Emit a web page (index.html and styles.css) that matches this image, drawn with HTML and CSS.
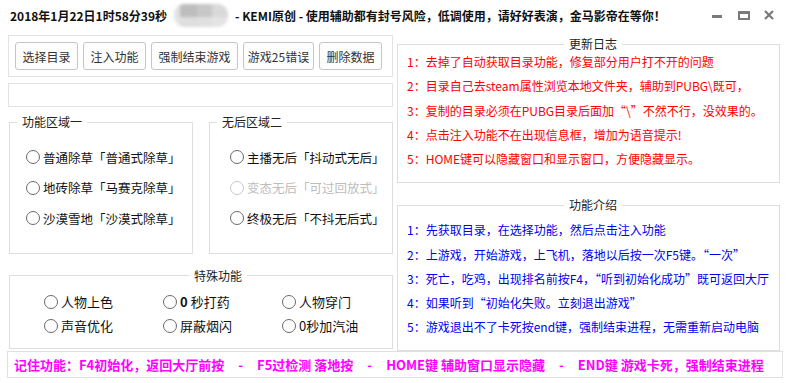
FILE: index.html
```html
<!DOCTYPE html>
<html lang="zh-CN">
<head>
    <meta charset="UTF-8">
    <title>KEMI原创</title>
    <link rel="stylesheet" href="styles.css">
</head>
<body>
    <div class="window">
        <div class="titlebar">
            <span class="title-time">2018年1月22日1时58分39秒</span>
            <span class="blurred"></span>
            <span class="title-text">- KEMI原创 - 使用辅助都有封号风险，低调使用，请好好表演，金马影帝在等你！</span>
            <div class="win-buttons">
                <span class="btn-min"></span>
                <span class="btn-max"></span>
                <svg class="btn-close" width="10" height="10" viewBox="0 0 10 10"><path d="M1 1L9 9M9 1L1 9" stroke="#7a7a7a" stroke-width="2.2"/></svg>
            </div>
        </div>

        <div class="main">
            <div class="left-col">
                <div class="toolbar">
                    <button class="tool-btn w63">选择目录</button>
                    <button class="tool-btn w63">注入功能</button>
                    <button class="tool-btn w87">强制结束游戏</button>
                    <button class="tool-btn w71">游戏25错误</button>
                    <button class="tool-btn w63">删除数据</button>
                </div>
                <div class="status-box"></div>

                <div class="group-row">
                    <fieldset class="group">
                        <legend>功能区域一</legend>
                        <div class="radio-list">
                            <label class="radio"><span class="dot"></span>普通除草「普通式除草」</label>
                            <label class="radio"><span class="dot"></span>地砖除草「马赛克除草」</label>
                            <label class="radio"><span class="dot"></span>沙漠雪地「沙漠式除草」</label>
                        </div>
                    </fieldset>
                    <fieldset class="group group-two">
                        <legend>无后区域二</legend>
                        <div class="radio-list">
                            <label class="radio"><span class="dot"></span>主播无后「抖动式无后」</label>
                            <label class="radio disabled"><span class="dot"></span>变态无后「可过回放式」</label>
                            <label class="radio"><span class="dot"></span>终极无后「不抖无后式」</label>
                        </div>
                    </fieldset>
                </div>

                <fieldset class="special">
                    <legend>特殊功能</legend>
                    <div class="special-grid">
                        <label class="radio"><span class="dot"></span>人物上色</label>
                        <label class="radio"><span class="dot"></span><b class="zero">0</b>秒打药</label>
                        <label class="radio"><span class="dot"></span>人物穿门</label>
                        <label class="radio"><span class="dot"></span>声音优化</label>
                        <label class="radio"><span class="dot"></span>屏蔽烟闪</label>
                        <label class="radio"><span class="dot"></span>0秒加汽油</label>
                    </div>
                </fieldset>
            </div>

            <div class="right-col">
                <fieldset class="panel log-panel">
                    <legend>更新日志</legend>
                    <ul class="lines red">
                        <li>1：去掉了自动获取目录功能，修复部分用户打不开的问题</li>
                        <li>2：目录自己去steam属性浏览本地文件夹，辅助到PUBG\既可，</li>
                        <li>3：复制的目录必须在PUBG目录后面加“\”不然不行，没效果的。</li>
                        <li>4：点击注入功能不在出现信息框，增加为语音提示!</li>
                        <li>5：HOME键可以隐藏窗口和显示窗口，方便隐藏显示。</li>
                    </ul>
                </fieldset>
                <fieldset class="panel intro-panel">
                    <legend>功能介绍</legend>
                    <ul class="lines blue">
                        <li>1：先获取目录，在选择功能，然后点击注入功能</li>
                        <li>2：上游戏，开始游戏，上飞机，落地以后按一次F5键。“一次”</li>
                        <li>3：死亡，吃鸡，出现排名前按F4，“听到初始化成功”既可返回大厅</li>
                        <li>4：如果听到“初始化失败。立刻退出游戏”</li>
                        <li>5：游戏退出不了卡死按end键，强制结束进程，无需重新启动电脑</li>
                    </ul>
                </fieldset>
            </div>
        </div>

        <div class="tips-bar">
            <span>记住功能：F4初始化，返回大厅前按</span>
            <span>-</span>
            <span>F5过检测 落地按</span>
            <span>-</span>
            <span>HOME键 辅助窗口显示隐藏</span>
            <span>-</span>
            <span>END键 游戏卡死，强制结束进程</span>
        </div>
    </div>
</body>
</html>
```

FILE: styles.css
```css
body {
    margin: 0; padding: 0;
    background: #fff;
    font-family: "Noto Sans CJK SC", sans-serif;
    font-size: 12px; color: #222;
}
.window { width: 786px; height: 383px; overflow: hidden; background: #fff; }

/* title bar */
.titlebar {
    height: 30px; display: flex; align-items: center;
    padding: 0 12px 0 10px; box-sizing: border-box;
    font-weight: bold; font-size: 12px; color: #111;
}
.blurred {
    width: 54px; height: 23px; margin: 0 7px;
    border-radius: 10px; filter: blur(1.5px);
    background:
        linear-gradient(180deg, rgba(255,255,255,0) 55%, rgba(230,230,230,0.8) 56%),
        linear-gradient(90deg, #e2e2e2 0 12%, #bdbdbd 12% 42%, #c7c7c7 42% 70%, #d9d9d9 70% 100%);
}
.win-buttons { margin-left: auto; display: flex; align-items: center; }
.btn-min { width: 10px; height: 3px; background: #7a7a7a; margin-right: 16px; margin-top: 2px; }
.btn-max {
    width: 12px; height: 9px; box-sizing: border-box;
    border: 2px solid #7a7a7a; border-top-width: 3px; margin-right: 14px;
}

/* layout */
.main { display: flex; gap: 4px; padding-top: 5px; height: 316px; box-sizing: border-box; }
.left-col { width: 393px; padding-left: 8px; box-sizing: border-box; }
.right-col { width: 383px; }

.toolbar {
    border: 1px solid #e3e3e3; padding: 6px;
    display: flex; gap: 5px;
}
.tool-btn {
    height: 28px; padding: 0;
    border: 1px solid #c6c6c6; border-radius: 3px;
    background: #fdfdfd; color: #333;
    font-family: inherit; font-size: 12px;
}
.w63 { width: 63px; }
.w71 { width: 71px; }
.w87 { width: 87px; }
.status-box { border: 1px solid #e3e3e3; height: 22px; margin-top: 6px; }

fieldset { margin: 0; border: 1px solid #dedede; min-width: 0; }
legend { padding: 0 5px; line-height: 18px; font-size: 12px; color: #222; }

.group-row { display: flex; gap: 16px; margin: 6px 0 0 1px; }
.group { width: 184px; box-sizing: border-box; padding: 11px 0 19px 7px; }
.radio-list { padding-left: 9px; }
.group-two .radio-list { padding-left: 13px; }

.radio { display: flex; align-items: center; height: 30.5px; font-size: 12.5px; color: #111; white-space: nowrap; }
.dot {
    width: 14px; height: 14px; box-sizing: border-box;
    border: 1px solid #6a6a6a; border-radius: 50%;
    background: #fff; margin-right: 3px; flex-shrink: 0;
}
.radio.disabled { color: #bdbdbd; }
.radio.disabled .dot { border-color: #c8c8c8; }

.special { margin: 13px 0 0 1px; padding: 5px 0 10px 34px; }
.special legend { margin: 0 auto; }
.special-grid { display: grid; grid-template-columns: 119px 119px 119px; }
.special-grid .radio { height: 24px; font-size: 13px; }
.zero { font-weight: bold; margin-right: 3px; }

/* right panels */
.panel { padding: 0 0 11px 9px; }
.panel legend { margin: 0 auto; }
.lines { list-style: none; margin: -3px 0 0 0; padding: 0; font-size: 12px; }
.lines li { line-height: 24.25px; white-space: nowrap; }
.red { color: #ff0000; }
.blue { color: #0000f0; }
.intro-panel { margin-top: 13px; padding-bottom: 10px; }
.intro-panel .lines { margin-top: 4px; }

/* bottom tips */
.tips-bar {
    margin: 5px 3px 0 7px; height: 27px; box-sizing: border-box;
    border: 1px solid #e0e0e0; padding-left: 6px;
    display: flex; align-items: center; gap: 14px;
    color: #ff00ff; font-weight: bold; font-size: 13px; white-space: nowrap;
}
```
